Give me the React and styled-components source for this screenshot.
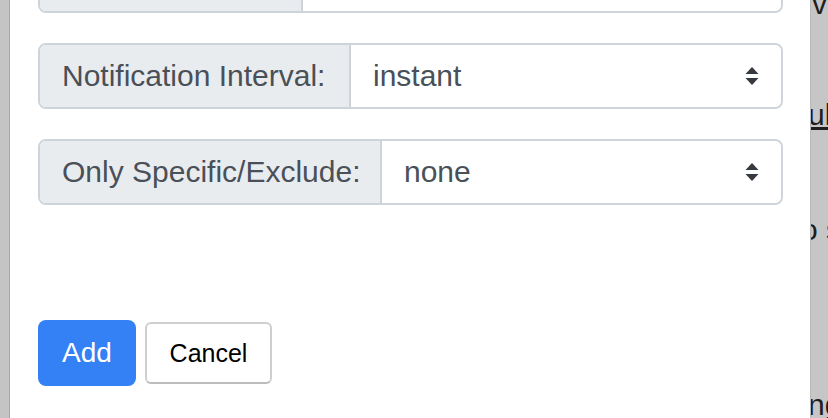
import React from 'react';
import styled, { createGlobalStyle } from 'styled-components';

const Global = createGlobalStyle`
  html, body { margin: 0; padding: 0; background: #c6c6c6; overflow: hidden; }
  body { font-family: "Liberation Sans", Arial, sans-serif; }
`;

const Stage = styled.div`
  display: flex;
  width: 828px;
  height: 418px;
  overflow: hidden;
`;

const Gutter = styled.div`
  width: 9px;
  flex: none;
  background: #c4c4c4;
`;

const Modal = styled.div`
  width: 802px;
  flex: none;
  box-sizing: border-box;
  background: #fff;
  border-left: 1px solid #a6a6a6;
  border-right: 1px solid #b9b9b9;
  padding: 0 27px 0 28px;
  display: flex;
  flex-direction: column;
`;

const Form = styled.div`
  display: flex;
  flex-direction: column;
  gap: 30px;
  margin-top: -53px;
`;

const InputGroup = styled.div`
  display: flex;
  height: 66px;
  box-sizing: border-box;
  border: 2px solid #ced4da;
  border-radius: 8px;
  overflow: hidden;
  font-size: 30px;
  color: #495057;
`;

const Label = styled.div`
  flex: none;
  display: flex;
  align-items: center;
  box-sizing: border-box;
  width: ${(p) => p.$width}px;
  padding: 0 22px;
  background: #e9ecef;
  border-right: 2px solid #ced4da;
  white-space: nowrap;
`;

const Select = styled.div`
  flex: 1;
  display: flex;
  align-items: center;
  justify-content: space-between;
  padding: 0 21px 0 22px;
  background: #fff;
`;

const Arrows = () => (
  <svg width="16" height="22" viewBox="0 0 16 22">
    <path d="M8 2 L14.5 9 H1.5 Z" fill="#343a40" />
    <path d="M8 20 L14.5 13 H1.5 Z" fill="#343a40" />
  </svg>
);

const Actions = styled.div`
  display: flex;
  align-items: center;
  gap: 9px;
  margin-top: 115px;
`;

const PrimaryButton = styled.button`
  width: 98px;
  height: 66px;
  border: none;
  border-radius: 8px;
  background: #3480f5;
  color: #fff;
  font-family: "Liberation Sans", Arial, sans-serif;
  font-size: 28px;
  padding: 0;
`;

const PlainButton = styled.button`
  width: 127px;
  height: 62px;
  box-sizing: border-box;
  border: 2px solid #cfcfcf;
  border-bottom-color: #bdbdbd;
  border-radius: 6px;
  background: #fff;
  color: #000;
  font-family: "Liberation Sans", Arial, sans-serif;
  font-size: 25px;
  padding: 0;
`;

const Behind = styled.div`
  flex: 1;
  overflow: hidden;
  display: flex;
  flex-direction: column;
  font-size: 30px;
  line-height: 30px;
  color: #1e1e1e;
`;

const BehindLine = styled.div`
  flex: none;
  height: 30px;
  white-space: nowrap;
  margin-top: ${(p) => p.$top}px;
  margin-left: ${(p) => p.$shift}px;
  text-decoration: ${(p) => (p.$link ? 'underline' : 'none')};
`;

const Row = ({ label, width, value }) => (
  <InputGroup>
    <Label $width={width}>{label}</Label>
    <Select>
      <span>{value}</span>
      <Arrows />
    </Select>
  </InputGroup>
);

export default function App() {
  return (
    <>
      <Global />
      <Stage>
        <Gutter />
        <Modal>
          <Form>
            <Row label="" width={263} value="" />
            <Row label="Notification Interval:" width={311} value="instant" />
            <Row label="Only Specific/Exclude:" width={342} value="none" />
          </Form>
          <Actions>
            <PrimaryButton>Add</PrimaryButton>
            <PlainButton>Cancel</PlainButton>
          </Actions>
        </Modal>
        <Behind>
          <BehindLine $top={-11} $shift={1}>v</BehindLine>
          <BehindLine $top={81} $shift={-3} $link>ul</BehindLine>
          <BehindLine $top={85} $shift={-10}>o s</BehindLine>
          <BehindLine $top={145} $shift={-3}>ng</BehindLine>
        </Behind>
      </Stage>
    </>
  );
}
